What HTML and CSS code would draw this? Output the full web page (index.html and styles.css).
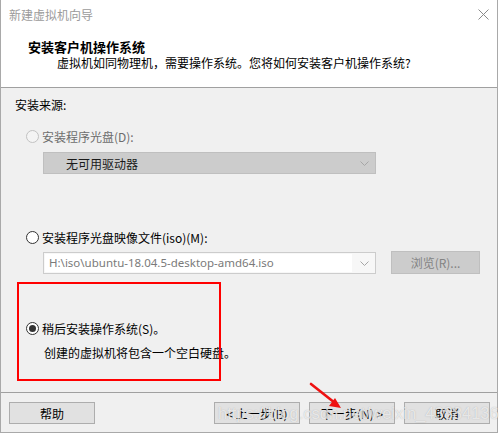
FILE: index.html
```html
<!DOCTYPE html>
<html lang="zh-CN">
<head>
<meta charset="utf-8">
<title>新建虚拟机向导</title>
<link rel="stylesheet" href="styles.css">
</head>
<body>
<div class="window">
  <div class="header">
    <div class="titlebar">
      <span class="title">新建虚拟机向导</span>
      <svg class="close" width="11" height="11" viewBox="0 0 11 11"><path d="M0.5 0.5 L10.5 10.5 M10.5 0.5 L0.5 10.5" stroke="#8a8a8a" stroke-width="1" fill="none"/></svg>
    </div>
    <div class="heading">安装客户机操作系统</div>
    <div class="subtitle">虚拟机如同物理机，需要操作系统。您将如何安装客户机操作系统?</div>
  </div>

  <div class="content">
    <div class="section-label">安装来源:</div>

    <div class="option disabled opt-disc">
      <span class="radio"></span>
      <span class="label">安装程序光盘(D):</span>
    </div>
    <div class="select disabled">
      <span class="select-text">无可用驱动器</span>
      <svg class="chev" width="9" height="5" viewBox="0 0 9 5"><path d="M0.5 0.5 L4.5 4.5 L8.5 0.5" stroke="#a6a6a6" fill="none"/></svg>
    </div>

    <div class="option opt-iso">
      <span class="radio"></span>
      <span class="label">安装程序光盘映像文件(iso)(M):</span>
    </div>
    <div class="combo-row">
      <div class="combo">
        <span class="combo-input">H:\iso\ubuntu-18.04.5-desktop-amd64.iso</span>
        <svg class="chev" width="9" height="5" viewBox="0 0 9 5"><path d="M0.5 0.5 L4.5 4.5 L8.5 0.5" stroke="#a6a6a6" fill="none"/></svg>
      </div>
      <div class="btn btn-disabled browse">浏览(R)...</div>
    </div>

    <div class="option opt-later">
      <span class="radio checked"></span>
      <span class="label">稍后安装操作系统(S)。</span>
    </div>
    <div class="desc">创建的虚拟机将包含一个空白硬盘。</div>
  </div>

  <div class="footer">
    <div class="btn">帮助</div>
    <div class="btn-group">
      <div class="btn">&lt; 上一步(B)</div>
      <div class="btn">下一步(N) &gt;</div>
      <div class="btn">取消</div>
    </div>
  </div>

  <div class="highlight"></div>
  <svg class="arrow" width="40" height="34" viewBox="0 0 40 34">
    <path d="M2 2 L26 21" stroke="#ee1111" stroke-width="2.6" stroke-linecap="round" fill="none"/>
    <path d="M32 26 L20 24 L26 16 Z" fill="#ee1111"/>
  </svg>
  <div class="watermark">https://blog.csdn.net/weixin_43884136</div>
</div>
</body>
</html>
```

FILE: styles.css
```css
html, body {
  margin: 0;
  padding: 0;
  background: #ffffff;
}

body {
  width: 499px;
  height: 433px;
  overflow: hidden;
  font-family: "Noto Sans CJK SC", "Noto Sans", sans-serif;
  color: #000;
}

.window {
  position: relative;
  width: 498px;
  height: 433px;
  box-sizing: border-box;
  border: 1px solid #a9a9a9;
  border-top: none;
  background: #f0f0f0;
  display: flex;
  flex-direction: column;
}

.header {
  height: 88px;
  box-sizing: border-box;
  background: #ffffff;
  border-bottom: 1px solid #a0a0a0;
}

.titlebar {
  height: 30px;
  display: flex;
  align-items: center;
  justify-content: space-between;
  padding-left: 8px;
  padding-right: 8px;
}

.title {
  font-size: 12px;
  line-height: 30px;
  color: #9b9b9b;
}

.close {
  display: block;
  margin-top: -2px;
}

.heading {
  margin-top: 9px;
  padding-left: 27px;
  font-size: 13px;
  font-weight: bold;
  line-height: 16px;
}

.subtitle {
  padding-left: 56px;
  font-size: 12px;
  line-height: 16px;
}

.content {
  flex: 1;
  padding: 9px 0 0 14px;
  font-size: 12px;
}

.section-label {
  line-height: 16px;
}

.option {
  display: flex;
  align-items: center;
  height: 16px;
  margin-left: 11px;
}

.opt-disc { margin-top: 15px; }
.opt-iso { margin-top: 55px; }
.opt-later { margin-top: 46px; }

.radio {
  width: 13px;
  height: 13px;
  box-sizing: border-box;
  border: 1px solid #333333;
  border-radius: 50%;
  background: #ffffff;
  margin-right: 3px;
  position: relative;
  flex: none;
}

.radio.checked::after {
  content: "";
  position: absolute;
  left: 2px;
  top: 2px;
  width: 7px;
  height: 7px;
  border-radius: 50%;
  background: #333333;
}

.disabled .radio {
  border-color: #c2c2c2;
  background: #f4f4f4;
}

.disabled .label {
  color: #6d6d6d;
}

.select {
  margin: 8px 0 0 28px;
  width: 333px;
  height: 22px;
  box-sizing: border-box;
  background: #cccccc;
  border: 1px solid #bfbfbf;
  display: flex;
  align-items: center;
  justify-content: space-between;
  padding: 0 6px 0 22px;
}

.select-text {
  color: #1a1a1a;
}

.chev {
  display: block;
}

.combo-row {
  display: flex;
  align-items: flex-start;
  margin: 7px 0 0 28px;
}

.combo {
  width: 333px;
  height: 22px;
  box-sizing: border-box;
  border: 1px solid #cccccc;
  background: #f7f7f7;
  display: flex;
  align-items: center;
  justify-content: space-between;
  padding: 0 6px 0 1px;
}

.combo-input {
  flex: none;
  width: 307px;
  height: 18px;
  background: #ffffff;
  padding-left: 4px;
  box-sizing: border-box;
  font-family: "Noto Sans", "Open Sans", sans-serif;
  font-size: 11.5px;
  line-height: 18px;
  color: #7a7a7a;
  white-space: nowrap;
  overflow: hidden;
}

.btn {
  width: 86px;
  height: 22px;
  box-sizing: border-box;
  border: 1px solid #adadad;
  background: #e1e1e1;
  display: flex;
  align-items: center;
  justify-content: center;
  font-size: 12px;
  color: #000;
}

.btn-disabled {
  background: #cccccc;
  border-color: #bfbfbf;
  color: #838383;
}

.browse {
  width: 89px;
  height: 23px;
  margin-left: 15px;
  margin-top: -1px;
}

.desc {
  margin-top: 9px;
  margin-left: 29px;
  line-height: 16px;
}

.footer {
  height: 40px;
  box-sizing: border-box;
  border-top: 1px solid #a0a0a0;
  padding: 9px 7px 0 8px;
  display: flex;
  justify-content: space-between;
  align-items: flex-start;
}

.btn-group {
  display: flex;
  gap: 9px;
}

.highlight {
  position: absolute;
  left: 16px;
  top: 282px;
  width: 204px;
  height: 99px;
  box-sizing: border-box;
  border: 2px solid #ff0000;
  pointer-events: none;
}

.arrow {
  position: absolute;
  left: 308px;
  top: 382px;
}

.watermark {
  position: absolute;
  left: 217px;
  top: 402px;
  font-family: "Liberation Sans", sans-serif;
  font-size: 16.5px;
  line-height: 22px;
  color: rgba(255, 255, 255, 0.7);
  text-shadow: 0 0 1px rgba(120, 120, 120, 0.5);
  white-space: nowrap;
  pointer-events: none;
}
```
